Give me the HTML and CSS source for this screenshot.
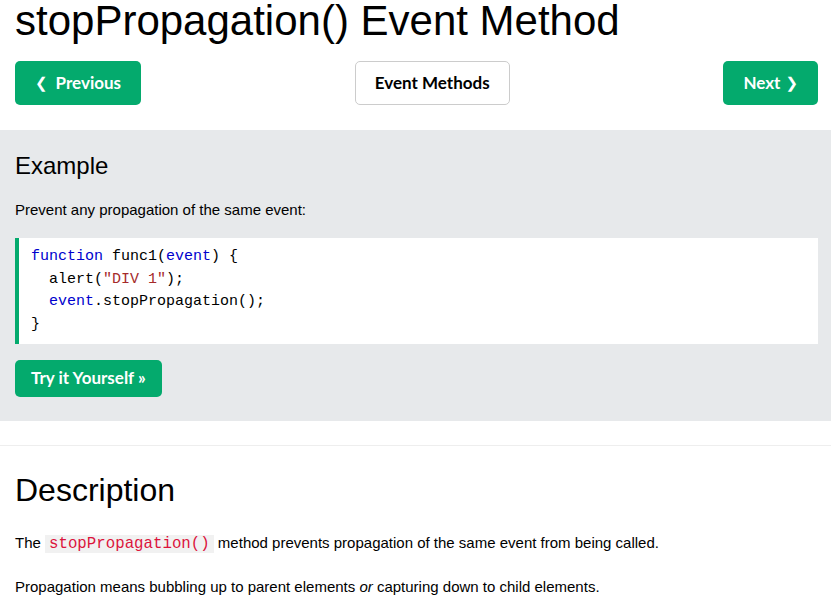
FILE: index.html
```html
<!DOCTYPE html>
<html lang="en">
<head>
<meta charset="utf-8">
<title>stopPropagation() Event Method</title>
<link rel="stylesheet" href="styles.css">
</head>
<body>
<div class="page">
  <h1 class="title">stopPropagation() Event Method</h1>
  <div class="nav">
    <a class="btn btn-green" href="#"><span class="chev chev-l">&#10094;</span>Previous</a>
    <a class="btn btn-white" href="#">Event Methods</a>
    <a class="btn btn-green" href="#">Next<span class="chev chev-r">&#10095;</span></a>
  </div>
</div>
<div class="example">
  <h2 class="example-title">Example</h2>
  <p class="text">Prevent any propagation of the same event:</p>
  <pre class="code"><span class="kw">function</span> func1(<span class="kw">event</span>) {
  alert(<span class="str">"DIV 1"</span>);
  <span class="kw">event</span>.stopPropagation();
}</pre>
  <a class="btn btn-green btn-try" href="#">Try it Yourself &raquo;</a>
</div>
<hr class="divider">
<div class="page">
  <h2 class="section-title">Description</h2>
  <p class="text">The <code class="inline">stopPropagation()</code> method prevents propagation of the same event from being called.</p>
  <p class="text p2">Propagation means bubbling up to parent elements <em>or</em> capturing down to child elements.</p>
</div>
</body>
</html>
```
FILE: styles.css
```css
html, body {
  margin: 0;
  padding: 0;
  background: #fff;
  color: #000;
  font-family: "Liberation Sans", Arial, sans-serif;
  font-size: 15px;
  line-height: 22.5px;
  overflow: hidden;
}

.page {
  padding: 0 13px 0 15px;
}

.title {
  font-size: 42px;
  font-weight: normal;
  line-height: 47px;
  margin: -3px 0 0;
}

.nav {
  display: flex;
  justify-content: space-between;
  margin-top: 17px;
}

.btn {
  display: inline-flex;
  align-items: center;
  justify-content: center;
  box-sizing: border-box;
  height: 44px;
  padding: 0 20px;
  border-radius: 5px;
  font-family: "Lato", "Noto Sans", sans-serif;
  font-weight: bold;
  font-size: 17px;
  text-decoration: none;
}

.btn-green {
  background: #04AA6D;
  color: #fff;
}

.btn-white {
  background: #fff;
  color: #000;
  border: 1px solid #ccc;
  padding: 0 19px;
}

.chev {
  font-family: "DejaVu Sans", sans-serif;
  font-size: 15px;
}

.chev-l {
  margin-right: 8px;
}

.chev-r {
  margin-left: 5px;
}

.example {
  background: #E7E9EB;
  margin-top: 25px;
  padding: 22px 13px 24px 15px;
}

.example-title {
  font-size: 24px;
  font-weight: normal;
  line-height: 27px;
  margin: 0 0 20px;
}

.text {
  margin: 0;
}

.code {
  margin: 16.5px 0 0;
  background: #fff;
  border-left: 4px solid #04AA6D;
  padding: 8px 12px;
  font-family: "Liberation Mono", "Courier New", monospace;
  font-size: 15px;
  line-height: 22.5px;
  color: #000;
}

.kw {
  color: mediumblue;
}

.str {
  color: brown;
}

.btn-try {
  margin-top: 16px;
  height: 37px;
  padding: 0 16px;
}

.divider {
  border: 0;
  border-top: 1px solid #eee;
  margin: 24px 0 0;
}

.section-title {
  font-size: 32px;
  font-weight: normal;
  line-height: 36px;
  margin: 26px 0 23.5px;
}

.inline {
  font-family: "Liberation Mono", "Courier New", monospace;
  font-size: 15.75px;
  color: crimson;
  background: #f1f1f1;
  padding: 0 4px;
}

.p2 {
  margin-top: 21px;
}
```
